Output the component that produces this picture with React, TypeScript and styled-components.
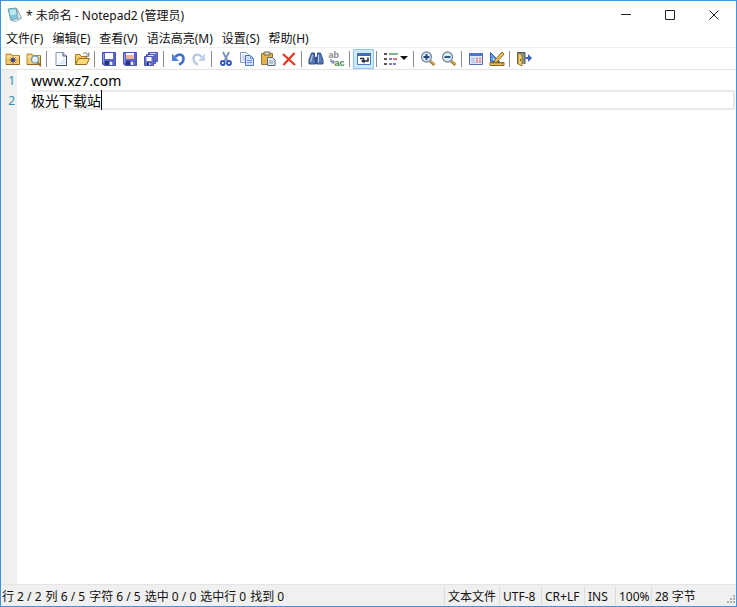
import React, { useState } from "react";
import styled, { createGlobalStyle } from "styled-components";

const GlobalStyle = createGlobalStyle`
  * { box-sizing: border-box; }
  body { margin: 0; }
  button, textarea { font: inherit; color: inherit; }
`;

const Window = styled.main`
  min-height: 100vh;
  display: flex;
  flex-direction: column;
  border: 1px solid #3f94dd;
  background: #fff;
  color: #111;
  font: 12px/16px "Noto Sans", "Noto Sans CJK SC", sans-serif;
`;

const TitleBar = styled.header`
  display: flex;
  align-items: center;
  height: 27px;
  padding-left: 6px;
`;

const Title = styled.h1`
  flex: 1;
  margin: 0 0 0 3px;
  padding-top: 2px;
  font-size: 12px;
  font-weight: 400;
  white-space: pre;
`;

const CaptionButton = styled.button`
  display: grid;
  place-items: center;
  width: 44px;
  height: 26px;
  padding: 0;
  border: 0;
  background: none;
`;

const MenuBar = styled.nav`
  display: flex;
  gap: 9px;
  height: 20px;
  padding: 2px 0 0 5px;
  border-bottom: 1px solid #f0f0f0;
`;

const MenuButton = styled.button`
  padding: 0;
  border: 0;
  background: none;
  white-space: nowrap;
`;

const Toolbar = styled.div`
  display: flex;
  align-items: center;
  height: 22px;
  padding-left: 1px;
  border-bottom: 1px solid #e3e3e3;
`;

const ToolButton = styled.button<{ $pressed?: boolean; $wide?: boolean }>`
  display: flex;
  align-items: center;
  justify-content: center;
  flex: none;
  width: ${(p) => (p.$wide ? 31 : 21)}px;
  height: 20px;
  padding: 0;
  border: 0;
  background: ${(p) => (p.$pressed ? "#cce8ff" : "none")};
  box-shadow: ${(p) => (p.$pressed ? "inset 0 0 0 1px #8fc8f5" : "none")};
`;

const Separator = styled.span`
  flex: none;
  width: 1px;
  height: 16px;
  margin: 0 3px 0 2px;
  background: #8c8c8c;
`;

const Editor = styled.section`
  flex: 1;
  display: flex;
  font-size: 14px;
  line-height: 20px;
`;

const Gutter = styled.ol`
  width: 16px;
  margin: 0;
  padding: 1px 2px 0 0;
  list-style: none;
  background: #f0f0f0;
  color: #2b91af;
  font-size: 12px;
  text-align: right;
`;

const Page = styled.div`
  position: relative;
  flex: 1;
  display: flex;
  padding: 0 1px 0 14px;
`;

const CurrentLine = styled.div`
  position: absolute;
  top: 20px;
  left: 14px;
  right: 1px;
  height: 20px;
  border: 2px solid #e8e8e8;
  border-left: 0;
`;

const Caret = styled.span`
  position: absolute;
  top: 20px;
  left: calc(14px + 5em);
  width: 1px;
  height: 20px;
  background: #000;
`;

const TextArea = styled.textarea`
  position: relative;
  flex: 1;
  padding: 1px 0 0;
  border: 0;
  outline: 0;
  resize: none;
  background: transparent;
  color: #000;
`;

const StatusBar = styled.footer`
  display: flex;
  align-items: center;
  height: 22px;
  border-top: 1px solid #e4e4e4;
  background: #f0f0f0;
  white-space: pre;
`;

const Position = styled.div`
  flex: 1;
  display: flex;
  gap: 4px;
  padding: 2px 0 0 1px;
`;

const StatusCell = styled.div<{ $width: number }>`
  flex: none;
  width: ${(p) => p.$width}px;
  padding: 2px 0 0 3px;
  border-left: 1px solid #dcdcdc;
`;

const LastCell = styled(StatusCell)`
  display: flex;
  justify-content: space-between;
  align-items: flex-end;
`;

const Svg = ({ children }: { children: React.ReactNode }) => (
  <svg width="16" height="16" viewBox="0 0 16 16" fill="none" aria-hidden="true">
    {children}
  </svg>
);

const Folder = () => (
  <>
    <path d="M1 4.5V3h5l1 1.5h7.5v9H1z" fill="#f3cb68" stroke="#b7892f" />
    <path d="M1.5 6h12.5" stroke="#fff0b8" />
    <path d="M1 13.5h13.5V5" stroke="#94691f" />
  </>
);

const Disk = ({ label = "#fff" }: { label?: string }) => (
  <>
    <path d="M1.5 1.5h13v13H3l-1.5-1.5z" fill="#5963c9" stroke="#4a52b4" />
    <path d="M4 2h8v6H4z" fill={label} />
    <path d="M4 2h8v2H4z" fill="#fff" />
    <path d="M4 10h8v4H4z" fill="#27317f" />
    <path d="M8.5 10.5h3V14h-3z" fill="#e6eaff" />
    <path d="M2.5 3v9" stroke="#919cf3" />
  </>
);

const Lens = ({ plus }: { plus?: boolean }) => (
  <>
    <path d="m10 10 4.5 4" stroke="#a97528" strokeWidth="3" />
    <path d="m10 9.5 4.5 4" stroke="#efc55f" />
    <circle cx="6.5" cy="6" r="5" fill="#d8ecff" stroke="#7c8da5" strokeWidth="1.3" />
    <path d={plus ? "M3.5 6h6M6.5 3v6" : "M3.5 6h6"} stroke="#27466f" strokeWidth="1.8" />
  </>
);

const icons: Record<string, React.ReactNode> = {
  favorites: (
    <>
      <Folder />
      <path d="M8 5.5v7M4.5 9h7M5.7 6.7l4.6 4.6m0-4.6-4.6 4.6" stroke="#6c4f48" />
      <path d="M8 7v4M6 9h4" stroke="#3541ab" strokeWidth="1.6" />
    </>
  ),
  browse: (
    <>
      <Folder />
      <path d="m11 11 4 4" stroke="#9d6d2e" strokeWidth="2" />
      <circle cx="9" cy="8.5" r="3.5" fill="#e5f5ff" stroke="#6f91bd" strokeWidth="1.2" />
    </>
  ),
  create: (
    <>
      <path d="M3 1.5h7l3.5 3.5v9.5H3z" fill="#f9fcff" stroke="#8194b2" />
      <path d="M10 1.5V5h3.5M3.5 14.5h10V5" stroke="#394e72" />
      <path d="M5 13h7V7z" fill="#dce8f8" />
    </>
  ),
  open: (
    <>
      <path d="M1.5 13.5v-10H6l1 2h5.5V8" fill="#f5cd65" stroke="#a87b22" />
      <path d="m1.5 13.5 3-6h11l-3 6z" fill="#ffdc79" stroke="#966a16" />
      <path d="M9 3c2-2 4-1.5 4.5 1M14.8 1.5v3.7h-3.6" stroke="#6c6e66" />
    </>
  ),
  save: <Disk />,
  saveAs: <Disk label="#f2b48f" />,
  saveCopy: (
    <>
      <path d="M5.5 1.5h9v9h-9z" fill="#6872cf" stroke="#5058b4" />
      <path d="M7.5 2h5v2h-5z" fill="#dfe4ff" />
      <path d="M3.5 3.5h9v9h-9z" fill="#6872cf" stroke="#5058b4" />
      <path d="M5.5 4h5v2h-5z" fill="#dfe4ff" />
      <path d="M1.5 5.5h9v9h-9z" fill="#6872cf" stroke="#4a52b4" />
      <path d="M3.5 6h5v4h-5z" fill="#fff" />
      <path d="M4 11.5h4V14H4z" fill="#252d78" />
      <path d="M6 12h1.5v2H6z" fill="#e6eaff" />
    </>
  ),
  undo: (
    <>
      <path d="M5 6c4-4 8.5-2.5 8.5 1.5 0 3-1.5 5-4.5 6" stroke="#3f70ca" strokeWidth="2.6" />
      <path d="M2 2.5V10h7z" fill="#4d82da" />
    </>
  ),
  redo: (
    <>
      <path d="M11 6C7 2 2.5 3.5 2.5 7.5c0 3 1.5 5 4.5 6" stroke="#b6c9e4" strokeWidth="2.4" />
      <path d="M14 2.5V10H7z" fill="#c3d2e9" />
    </>
  ),
  cut: (
    <>
      <path d="m5 1 4.5 9M11 1 6.5 10" stroke="#7590b6" strokeWidth="1.8" />
      <circle cx="4.8" cy="12" r="2" stroke="#3157b4" strokeWidth="1.8" />
      <circle cx="11" cy="12" r="2" stroke="#3157b4" strokeWidth="1.8" />
    </>
  ),
  copy: (
    <>
      <path d="M1.5 1.5h6L10 4v7.5H1.5z" fill="#f5f9ff" stroke="#879bc1" />
      <path d="M3 5h5M3 7h4M3 9h4" stroke="#a6b9d8" />
      <path d="M6.5 4.5h5l3 3v7h-8z" fill="#cfe1ff" stroke="#5573b9" />
      <path d="M11.5 4.5v3h3M8 9.5h5M8 11.5h5" stroke="#7196dc" />
    </>
  ),
  paste: (
    <>
      <path d="M1.5 2.5h11v11h-11z" fill="#e1b548" stroke="#99742b" />
      <path d="M4 1h6v3H4z" fill="#d6d4be" stroke="#716b52" />
      <path d="M7.5 6.5h5L15 9v5.5H7.5z" fill="#e3edfa" stroke="#566582" />
      <path d="M9 10h4M9 12h4" stroke="#8194b5" />
    </>
  ),
  remove: <path d="m2 3 12 11M13.5 2 2.5 14" stroke="#df3c22" strokeWidth="2.3" />,
  find: (
    <>
      <path d="M3.5 2h3v3l1 2v6H1V9zM9.5 2h3L15 9v4H8.5V7l1-2z" fill="#5879b5" stroke="#314d84" />
      <path d="M6.5 6h3v3h-3z" fill="#314d84" />
      <path d="M4.5 4 3 9v2M10.5 4v7" stroke="#b9cff1" />
    </>
  ),
  wrap: (
    <>
      <path d="M1.5 2.5h13v11h-13z" fill="#fff" stroke="#557db4" />
      <path d="M1 2h14v3H1z" fill="#466ea6" />
      <path d="M4 7.5h4M12 6.5V10H7" stroke="#202838" strokeWidth="1.5" />
      <path d="M8.5 7.5v5L5 10z" fill="#202838" />
    </>
  ),
  scheme: (
    <>
      <path d="M1 3h3M1 8h3M1 13h3" stroke="#555" strokeWidth="2" />
      <path d="M6 3h9" stroke="#5a9860" strokeWidth="1.5" />
      <path d="M6 8h3" stroke="#5254b5" strokeWidth="1.5" />
      <path d="M10 8h4" stroke="#c65050" strokeWidth="1.5" />
      <path d="M6 13h3M10 13h3" stroke="#5254b5" strokeWidth="1.5" />
    </>
  ),
  zoomIn: <Lens plus />,
  zoomOut: <Lens />,
  settings: (
    <>
      <path d="M1.5 2.5h13v11h-13z" fill="#dce8ff" stroke="#536fac" />
      <path d="M1 2h14v3H1z" fill="#4b78c8" />
      <path d="M3 7.5h4M3 9.5h4M3 11.5h4" stroke="#a7b8da" />
      <path d="M8 7.5h2M11 7.5h2M9 9v3M12 9v3" stroke="#e47f72" strokeWidth="1.5" />
    </>
  ),
  customize: (
    <>
      <path d="M1.5 1.5v9h9z" fill="#5f97e0" stroke="#376ab5" />
      <path d="M4 7v2h2z" fill="#fff" />
      <path d="m6 9 7-8 2 2-7 8-3 1z" fill="#edc153" stroke="#87621e" />
      <path d="M1 11.5h14v3H1z" fill="#e1bd5b" stroke="#8b6c2b" />
      <path d="M4 12v1M7 12v1M10 12v1M13 12v1" stroke="#785c24" />
    </>
  ),
  exit: (
    <>
      <path d="M1.5 13V1.5H9V13" fill="#8a8f96" stroke="#4c535d" />
      <path d="m2 2 4 2v11l-4-2z" fill="#efd06d" stroke="#9e762b" />
      <path d="M4.5 8v2" stroke="#765820" />
      <path d="M15 7H9.5" stroke="#3e61bd" strokeWidth="2" />
      <path d="M12 3v8l4-4z" fill="#3e61bd" />
    </>
  ),
};

const ReplaceGlyph = styled.span`
  position: relative;
  width: 16px;
  height: 16px;
  font: 700 9px/8px "Liberation Sans", sans-serif;
  color: #888;
  text-align: left;
`;

const ReplaceTarget = styled.span`
  display: block;
  text-align: right;
  color: #3d8746;
`;

const ReplaceArrow = styled.svg`
  position: absolute;
  left: 1px;
  top: 8px;
`;

const Replace = () => (
  <ReplaceGlyph>
    ab
    <ReplaceTarget>ac</ReplaceTarget>
    <ReplaceArrow width="5" height="6" viewBox="0 0 5 6" fill="none">
      <path d="M1 0v3h3M2.5 1 4.5 3l-2 2" stroke="#4b5fa8" />
    </ReplaceArrow>
  </ReplaceGlyph>
);

const groups: [string, string][][] = [
  [["favorites", "收藏夹"], ["browse", "浏览"]],
  [["create", "新建"], ["open", "打开"]],
  [["save", "保存"], ["saveAs", "另存为"], ["saveCopy", "保存副本"]],
  [["undo", "撤销"], ["redo", "重做"]],
  [["cut", "剪切"], ["copy", "复制"], ["paste", "粘贴"], ["remove", "删除"]],
  [["find", "查找"], ["replace", "替换"]],
  [["wrap", "自动换行"]],
  [["scheme", "语法方案"]],
  [["zoomIn", "放大"], ["zoomOut", "缩小"]],
  [["settings", "选择方案"], ["customize", "自定义方案"]],
  [["exit", "退出"]],
];

const menus = ["文件(F)", "编辑(E)", "查看(V)", "语法高亮(M)", "设置(S)", "帮助(H)"];
const position = ["行 2 / 2", "列 6 / 5", "字符 6 / 5", "选中 0 / 0", "选中行 0", "找到 0"];
const cells: [string, number][] = [
  ["文本文件", 55],
  ["UTF-8", 42],
  ["CR+LF", 43],
  ["INS", 31],
  ["100%", 36],
];

export default function App() {
  const [text, setText] = useState("www.xz7.com\n极光下载站");
  const [wrap, setWrap] = useState(true);

  return (
    <Window>
      <GlobalStyle />
      <TitleBar>
        <Svg>
          <path d="m2 2 8-1 5 10-7 4-5-2z" fill="#8babb5" />
          <path d="m1 2 8-1 2 11-7 1z" fill="#81c6dc" stroke="#6b9fb1" />
          <path d="m2.5 3 6-.7 1 5-6 1z" fill="#bde9f3" />
          <path d="m10 2 4.5 9-3.5 2.5z" fill="#d8e6e8" stroke="#89a7ae" strokeWidth=".6" />
          <path d="m4 13 7-1 3-1-5 3.5z" fill="#f5fbfb" stroke="#8ba6ab" strokeWidth=".6" />
        </Svg>
        <Title>* 未命名 - Notepad2 (管理员)</Title>
        <CaptionButton aria-label="最小化">
          <svg width="10" height="10" stroke="#222"><path d="M0 4.5h10" /></svg>
        </CaptionButton>
        <CaptionButton aria-label="最大化">
          <svg width="10" height="10" stroke="#222" fill="none"><path d="M.5.5h9v9h-9z" /></svg>
        </CaptionButton>
        <CaptionButton aria-label="关闭">
          <svg width="10" height="10" stroke="#222"><path d="m.5.5 9 9m0-9-9 9" /></svg>
        </CaptionButton>
      </TitleBar>

      <MenuBar aria-label="菜单">
        {menus.map((m) => <MenuButton key={m}>{m}</MenuButton>)}
      </MenuBar>

      <Toolbar role="toolbar" aria-label="工具栏">
        {groups.map((group, i) => (
          <React.Fragment key={i}>
            {i > 0 && <Separator />}
            {group.map(([id, label]) => (
              <ToolButton
                key={id}
                aria-label={label}
                aria-pressed={id === "wrap" ? wrap : undefined}
                $pressed={id === "wrap" && wrap}
                $wide={id === "scheme"}
                onClick={id === "wrap" ? () => setWrap(!wrap) : undefined}
              >
                {id === "replace" ? <Replace /> : <Svg>{icons[id]}</Svg>}
                {id === "scheme" && (
                  <svg width="9" height="5" aria-hidden="true"><path d="M1 0h8L5 4z" fill="#111" /></svg>
                )}
              </ToolButton>
            ))}
          </React.Fragment>
        ))}
      </Toolbar>

      <Editor>
        <Gutter aria-hidden="true">
          {text.split("\n").map((_, i) => <li key={i}>{i + 1}</li>)}
        </Gutter>
        <Page>
          <CurrentLine />
          <TextArea
            aria-label="文本"
            spellCheck={false}
            wrap={wrap ? "soft" : "off"}
            value={text}
            onChange={(e) => setText(e.target.value)}
          />
          <Caret />
        </Page>
      </Editor>

      <StatusBar>
        <Position>{position.map((p) => <span key={p}>{p}</span>)}</Position>
        {cells.map(([label, width]) => <StatusCell key={label} $width={width}>{label}</StatusCell>)}
        <LastCell $width={85}>
          28 字节
          <svg width="10" height="10" fill="#b0b0b0" aria-hidden="true">
            <path d="M7 0h2v2H7zM4 3h2v2H4zM7 3h2v2H7zM1 6h2v2H1zM4 6h2v2H4zM7 6h2v2H7z" />
          </svg>
        </LastCell>
      </StatusBar>
    </Window>
  );
}
